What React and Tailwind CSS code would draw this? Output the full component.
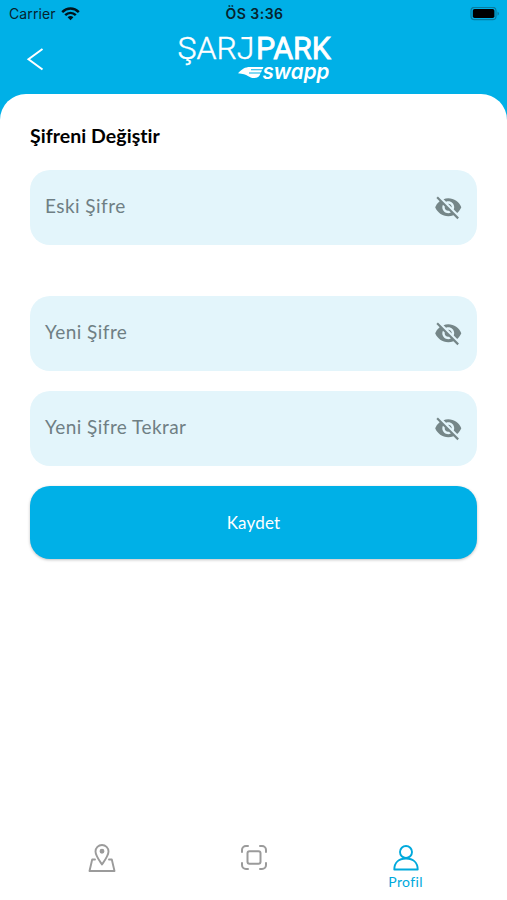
import React from 'react';
import { MdVisibilityOff } from 'react-icons/md';

const StatusBar = () => (
  <div className="grid h-7 grid-cols-3 items-center pl-[9px] pr-[7px] font-['Inter',sans-serif] text-[14px] leading-none text-[#06232e]">
    <div className="flex items-center gap-[5px]">
      <span className="tracking-[0.1px]">Carrier</span>
      <svg width="19" height="14" viewBox="0 0 19 14" fill="none" stroke="#00141c" strokeWidth="2.5">
        <path d="M1.2 5.1C6 .3 13 .3 17.8 5.1" />
        <path d="M4.2 8.2C7.3 5.2 11.7 5.2 14.8 8.2" />
        <path d="M6.6 10.2C8.4 8.7 10.6 8.7 12.4 10.2L9.5 13.2Z" fill="#00141c" stroke="none" />
      </svg>
    </div>
    <span className="text-center font-semibold tracking-[0.5px]">ÖS 3:36</span>
    <svg className="justify-self-end" width="30" height="14" viewBox="0 0 30 14">
      <rect x="1" y="0.3" width="25" height="12.4" rx="3.5" fill="none" stroke="#087da0" strokeWidth="1.2" />
      <rect x="2.8" y="2" width="21.6" height="9" rx="1.8" fill="#000" />
      <path d="M27.5 4.5v4.2c2-.8 2-3.4 0-4.2Z" fill="#087da0" />
    </svg>
  </div>
);

const Logo = () => (
  <svg width="156" height="62" viewBox="0 -8 156 62" fill="#fff">
    <g fontFamily="Roboto, sans-serif" fontSize="31" stroke="#fff">
      <text x="1.5" y="27" fontWeight="300" strokeWidth="0.4" textLength="77" lengthAdjust="spacingAndGlyphs">ŞARJ</text>
      <text x="80" y="27" fontWeight="400" strokeWidth="0.8" textLength="75" lengthAdjust="spacingAndGlyphs">PARK</text>
    </g>
    {/* top bar of the J */}
    <path d="M65.5 5H76V7.2H65.5Z" />
    {/* wing */}
    <path d="M62 41.2C66 37 69 35 74 35H87.5L86.5 37.3H75V38.2H86L85 40.5H73V41.4H84.5C83.5 44.5 81.5 46 78 46C73 46 72 42 62 41.2Z" />
    <text
      x="86.5"
      y="47.3"
      fontFamily="Inter, sans-serif"
      fontSize="20.5"
      fontWeight="600"
      fontStyle="italic"
      textLength="67"
      lengthAdjust="spacingAndGlyphs"
    >
      swapp
    </text>
  </svg>
);

const PasswordField = ({ label, className }) => (
  <div className={`flex h-[75px] items-center justify-between rounded-[20px] bg-[#e3f5fb] pl-[15px] pr-[15px] ${className}`}>
    <span className="pb-[3px] text-[19px] tracking-[0.45px] text-[#6f7f84]">{label}</span>
    <MdVisibilityOff className="text-[#758688]" size={28.5} />
  </div>
);

const App = () => {
  return (
    <div className="flex h-[900px] w-[507px] flex-col overflow-hidden bg-[#00b0e7] font-['Lato',sans-serif]">
      <StatusBar />

      {/* Header */}
      <header className="grid h-[66px] grid-cols-[1fr_156px_1fr] items-start">
        <button className="ml-[26px] mt-5 w-6">
          <svg width="20" height="23" viewBox="0 0 20 23" fill="none" stroke="#fff" strokeWidth="2">
            <path d="M16.5 1L2.5 11.2L16.5 21.5" />
          </svg>
        </button>
        <div className="-mt-1">
          <Logo />
        </div>
      </header>

      {/* Content */}
      <main className="flex flex-1 flex-col rounded-t-[26px] bg-white px-[30px] pt-[30px]">
        <h1 className="h-[46px] text-[19.5px] font-bold leading-6 tracking-[0.05px] text-black">Şifreni Değiştir</h1>
        <PasswordField label="Eski Şifre" className="mb-[51px]" />
        <PasswordField label="Yeni Şifre" className="mb-5" />
        <PasswordField label="Yeni Şifre Tekrar" className="mb-5" />
        <button className="h-[73px] w-full rounded-[20px] bg-[#00b0e7] text-[17px] tracking-[0.2px] text-white shadow-[0_1px_3px_rgba(0,0,0,0.25)]">
          Kaydet
        </button>
      </main>

      {/* Bottom navigation */}
      <nav className="grid h-[60px] grid-cols-3 items-start bg-white pl-[27px] pr-[25px] pt-[3px]">
        <button className="flex justify-center pr-0.5">
          <svg width="28" height="30" viewBox="0 0 28 30" fill="none" stroke="#9b9b9b" strokeWidth="1.9" strokeLinejoin="round" strokeLinecap="round">
            <path d="M14 21.5C11 17 7.5 12.5 7.5 8.5a6.5 6.5 0 0 1 13 0C20.5 12.5 17 17 14 21.5Z" />
            <circle cx="14" cy="8.3" r="1.5" fill="#9b9b9b" />
            <path d="M7 16.5H4.2L1.5 28H26.5L23.8 16.5H21" />
          </svg>
        </button>
        <button className="flex justify-center">
          <svg width="28" height="30" viewBox="0 0 28 30" fill="none" stroke="#9b9b9b" strokeWidth="2" strokeLinecap="round">
            <path d="M2 9V7a4 4 0 0 1 4-4H8M20 3h2a4 4 0 0 1 4 4V9M26 20v2a4 4 0 0 1-4 4H20M8 26H6a4 4 0 0 1-4-4V20" />
            <rect x="7.5" y="8.3" width="13" height="12.5" rx="2" />
          </svg>
        </button>
        <button className="flex flex-col items-center text-[#00a9dc]">
          <svg width="28" height="30" viewBox="0 0 28 30" fill="none" stroke="currentColor" strokeWidth="1.9" strokeLinejoin="round">
            <circle cx="14" cy="9" r="6" />
            <path d="M2.3 26.5C2.3 19.5 7 15.5 14 15.5S25.7 19.5 25.7 26.5Z" />
          </svg>
          <span className="pr-px pt-px text-[14px] leading-4 tracking-[0.4px]">Profil</span>
        </button>
      </nav>
    </div>
  );
};

export default App;
